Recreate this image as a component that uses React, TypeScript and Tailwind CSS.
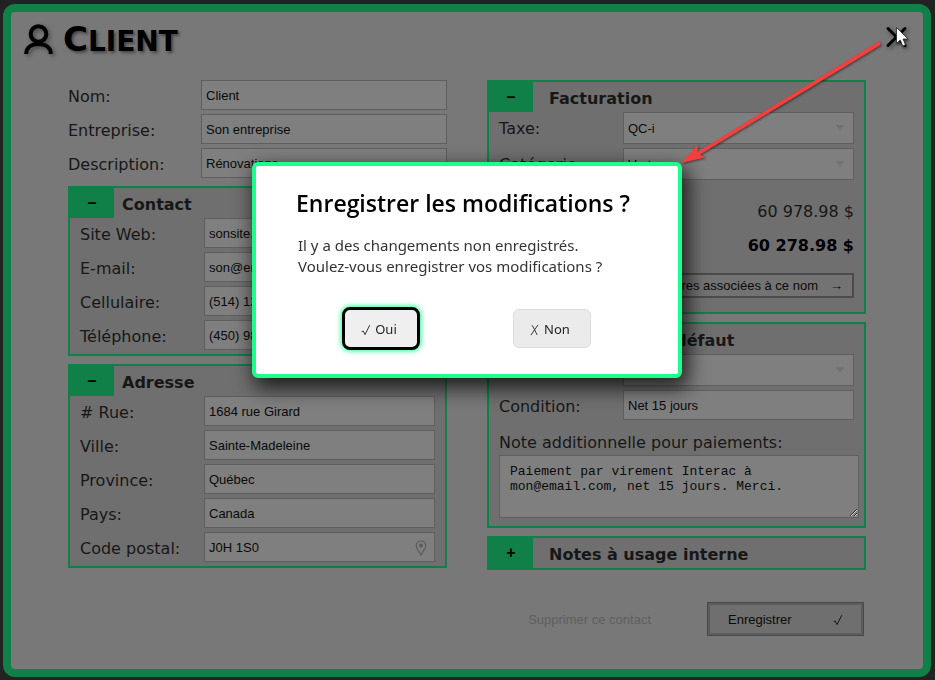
import { useId, type ReactNode } from 'react';

const labelText = 'font-["DejaVu_Sans",Verdana,sans-serif] text-[16px] leading-[24px] text-[#171717]';
const fieldText = 'font-["Liberation_Sans",Arial,sans-serif] text-[13px] leading-[16px] text-[#0a0a0a]';
const fieldBox = 'min-w-0 flex-1 border border-[#5f5f5f] bg-[#7f7f7f] px-1 pt-0.5 outline-none';

type FieldProps = { label: string; value: string; wide?: boolean; pin?: boolean };

function TextField({ label, value, wide, pin }: FieldProps) {
  const id = useId();
  return (
    <div className="relative flex h-[30px]">
      <label htmlFor={id} className={`${labelText} shrink-0 pt-[5px] ${wide ? 'w-[133px]' : 'w-[124px]'}`}>
        {label}
      </label>
      <input id={id} defaultValue={value} className={`${fieldBox} ${fieldText}`} />
      {pin && (
        <svg className="absolute top-2 right-2 h-4 w-3" viewBox="0 0 12 16" fill="none" aria-hidden="true">
          <path d="M6 1C3.2 1 1.2 3 1.2 5.6 1.2 8.6 4 10.800 6 15c2-4.200 4.800-6.400 4.800-9.400C10.800 3 8.800 1 6 1Z" stroke="#5c5c5c" strokeWidth="1.200" />
          <circle cx="6" cy="5.500" r="2" fill="#5c5c5c" />
        </svg>
      )}
    </div>
  );
}

function SelectField({ label, value }: FieldProps) {
  const id = useId();
  return (
    <div className="relative flex h-8">
      <label htmlFor={id} className={`${labelText} w-[124px] shrink-0 pt-[5px]`}>
        {label}
      </label>
      <select id={id} defaultValue={value} className={`${fieldBox} ${fieldText} appearance-none`}>
        <option>{value}</option>
      </select>
      <svg className="pointer-events-none absolute top-3 right-2 h-2 w-3" viewBox="0 0 12 8" aria-hidden="true">
        <path d="M1.500 1h9L6 7Z" fill="#737373" />
      </svg>
    </div>
  );
}

function Check({ className }: { className: string }) {
  return (
    <svg className={className} viewBox="0 0 10 12" fill="none" strokeLinecap="round" strokeLinejoin="round" aria-hidden="true">
      <path d="M1 7.500 2.200 7 4 10.600 8.600 1.500" stroke="currentColor" strokeWidth=".9" />
    </svg>
  );
}

function Cross({ className }: { className: string }) {
  return (
    <svg className={className} viewBox="0 0 10 12" fill="none" strokeLinecap="round" aria-hidden="true">
      <path d="M2.200 1.500C3.500 3 5.500 8 7 10.600M7.800 1.200C5.500 4 3.500 7.500 1.200 10.800" stroke="currentColor" strokeWidth=".9" />
    </svg>
  );
}

function Section({ title, sign = '–', indent, children }: { title: string; sign?: string; indent?: boolean; children?: ReactNode }) {
  return (
    <section className="border-2 border-[#108048] bg-[#6f6f6f]">
      <div className="flex h-[30px] items-center">
        <button type="button" aria-label={title} className="h-full w-11 shrink-0 bg-[#108048] font-['Liberation_Sans',Arial,sans-serif] text-[16px] font-bold text-black">
          {sign}
        </button>
        <h2 className={`font-["DejaVu_Sans",Verdana,sans-serif] pt-1 text-[16px] leading-[24px] font-bold text-[#171717] ${indent ? 'pl-4' : 'pl-2'}`}>
          {title}
        </h2>
      </div>
      {children}
    </section>
  );
}

function Confirm() {
  return (
    <div className="fixed inset-0 flex items-start justify-center pt-[162px] pr-px">
      <div role="dialog" aria-modal="true" aria-labelledby="confirm-title" className="flex h-[216px] w-[430px] flex-col rounded-md border-4 border-[#1cff8c] bg-white font-['Noto_Sans','Segoe_UI',sans-serif] shadow-[4px_8px_20px_2px_rgba(0,0,0,0.75)]">
        <h2 id="confirm-title" className="pt-[22px] pl-10 font-['Open_Sans','Segoe_UI',sans-serif] text-[23px] leading-[30px] font-semibold whitespace-nowrap text-black">
          Enregistrer les modifications ?
        </h2>
        <p className="pt-[17px] pl-[42px] text-[15px] leading-[21px] text-[#333]">
          Il y a des changements non enregistrés.
          <br />
          Voulez-vous enregistrer vos modifications ?
        </p>
        <div className="flex items-center justify-between pt-[30px] pr-[87px] pl-[86px]">
          <button type="button" className="flex h-[43px] w-[78px] items-center justify-center gap-1 rounded-lg border-[3px] border-black bg-[#efefef] pt-0.5 pr-1 text-[13px] text-[#222] shadow-[0_0_5px_1px_#1cff8c]">
            <Check className="h-3 w-[10px]" />
            Oui
          </button>
          <button type="button" className="flex h-[39px] w-[78px] items-center justify-center gap-1 rounded-md border border-[#ddd] bg-[#ebebeb] pt-0.5 pr-1 text-[13px] text-[#222]">
            <Cross className="h-3 w-[10px]" />
            Non
          </button>
        </div>
      </div>
    </div>
  );
}

export default function App() {
  return (
    <div className="relative flex min-h-screen flex-col overflow-hidden bg-[#222] pt-1 pr-1 pb-[3px] pl-[3px]">
      <main className="relative flex flex-1 flex-col rounded-xl border-8 border-[#108048] bg-[#787878]">
        <header className="flex h-[68px] items-start justify-between pr-[15px] pl-3">
          <div className="flex items-start gap-2 pt-2">
            <svg className="h-10 w-8 drop-shadow-[2px_2px_2px_rgba(0,0,0,0.4)]" viewBox="0 0 32 40" fill="none" stroke="#000" strokeWidth="4" aria-hidden="true">
              <circle cx="15.500" cy="14" r="7.800" />
              <path d="M3.200 34c0-6.500 5.200-10 12.300-10s12.300 3.500 12.300 10" />
            </svg>
            <h1 className="font-['DejaVu_Sans',Verdana,sans-serif] text-[34px] leading-[38px] font-bold text-black [font-variant:small-caps] text-shadow-[2px_2px_3px_rgba(0,0,0,0.4)]">
              C<span className="text-[40px] leading-[0px]">lient</span>
            </h1>
          </div>
          <button type="button" aria-label="Fermer" className="mt-3">
            <svg className="size-6 drop-shadow-[2px_2px_2px_rgba(0,0,0,0.4)]" viewBox="0 0 24 24" stroke="#000" strokeWidth="3" strokeLinecap="round">
              <path d="M4 4.500l17 17M21 4.500l-17 17" />
            </svg>
          </button>
        </header>

        <div className="grid grid-cols-2 items-start gap-10 px-[57px]">
          <div className="flex flex-col gap-2">
            <div className="flex flex-col gap-1">
              <TextField wide label="Nom:" value="Client" />
              <TextField wide label="Entreprise:" value="Son entreprise" />
              <TextField wide label="Description:" value="Rénovations" />
            </div>
            <Section title="Contact">
              <div className="flex flex-col gap-1 px-[10px] pb-1">
                <TextField label="Site Web:" value="sonsite.com" />
                <TextField label="E-mail:" value="son@email.com" />
                <TextField label="Cellulaire:" value="(514) 123-4567" />
                <TextField label="Téléphone:" value="(450) 987-6543" />
              </div>
            </Section>
            <Section title="Adresse">
              <div className="flex flex-col gap-1 px-[10px] pb-1">
                <TextField label="# Rue:" value="1684 rue Girard" />
                <TextField label="Ville:" value="Sainte-Madeleine" />
                <TextField label="Province:" value="Québec" />
                <TextField label="Pays:" value="Canada" />
                <TextField label="Code postal:" value="J0H 1S0" pin />
              </div>
            </Section>
          </div>

          <div className="flex flex-col gap-2">
            <Section title="Facturation" indent>
              <div className="flex flex-col px-[10px] pb-[14px]">
                <div className="flex flex-col gap-1">
                  <SelectField label="Taxe:" value="QC-i" />
                  <SelectField label="Catégorie:" value="Vert" />
                </div>
                <div className={`${labelText} mt-[14px] flex h-[34px] items-center justify-end pt-0.5`}>60 978.98 $</div>
                <div className="flex h-[34px] items-center justify-end pt-0.5 font-['DejaVu_Sans',Verdana,sans-serif] text-[16px] leading-[24px] font-bold text-black">
                  60 278.98 $
                </div>
                <button type="button" className={`${fieldText} mt-[11px] flex h-[25px] items-center justify-end gap-3 border-2 border-[#4b4b4b] bg-[#737373] pr-[9px]`}>
                  <span>Factures associées à ce nom</span>
                  <span>→</span>
                </button>
              </div>
            </Section>
            <Section title="Paiement par défaut" indent>
              <div className="flex flex-col px-[10px] pb-2">
                <div className="flex flex-col gap-1">
                  <SelectField label="Mode:" value="" />
                  <TextField label="Condition:" value="Net 15 jours" />
                </div>
                <label htmlFor="note" className={`${labelText} pt-[11px]`}>
                  Note additionnelle pour paiements:
                </label>
                <textarea
                  id="note"
                  defaultValue={'Paiement par virement Interac à\nmon@email.com, net 15 jours. Merci.'}
                  className="-mr-[5px] h-[63px] border border-[#5f5f5f] bg-[#7f7f7f] px-[10px] py-2 font-['Liberation_Mono','Courier_New',monospace] text-[13px] leading-[15px] text-[#0a0a0a] outline-none"
                />
              </div>
            </Section>
            <Section title="Notes à usage interne" sign="+" indent />
          </div>
        </div>

        <footer className="flex items-center justify-end gap-14 pt-8 pr-[59px] pb-[33px]">
          <button type="button" className="pt-0.5 font-['Liberation_Sans',Arial,sans-serif] text-[13px] text-[#5f5f5f]">
            Supprimer ce contact
          </button>
          <button type="button" className={`${fieldText} flex h-[34px] w-[157px] items-center justify-between border border-[#484848] bg-[#6f6f6f] px-5 pt-0.5 inset-ring-2 inset-ring-[#5c5c5c]`}>
            <span>Enregistrer</span>
            <Check className="h-3 w-[10px]" />
          </button>
        </footer>
      </main>

      <Confirm />

      <svg className="pointer-events-none absolute top-0 right-0 h-[180px] w-[260px]" viewBox="0 0 260 180" aria-hidden="true">
        <g className="drop-shadow-[1px_1px_1px_rgba(0,0,0,0.5)]" fill="#f43f3f">
          <path d="M6 163 23 144.500 22.500 152 204 41.200 206 44.800 25 154.500 30 157.500Z" />
        </g>
        <path className="drop-shadow-[1px_2px_1px_rgba(0,0,0,0.5)]" d="M221.500 27.500v16l3.700-3.500 2.600 6 2.700-1.200-2.500-5.800h5Z" fill="#fff" stroke="#222" strokeWidth=".8" />
      </svg>
    </div>
  );
}
